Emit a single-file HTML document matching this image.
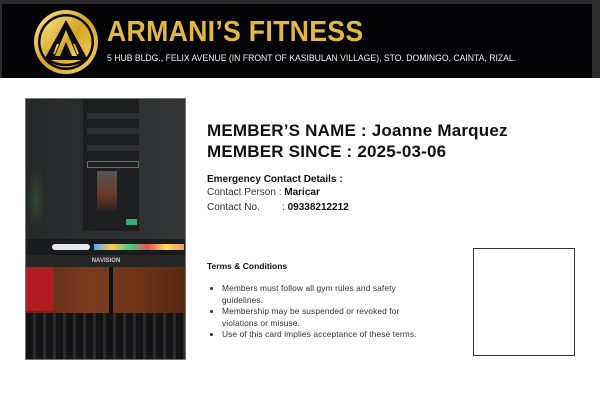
<!DOCTYPE html>
<html><head><meta charset="utf-8"><style>
*{margin:0;padding:0;box-sizing:border-box}
body{width:600px;height:400px;background:#fff;position:relative;overflow:hidden;font-family:"Liberation Sans",sans-serif;color:#111}
.hdr{position:absolute;left:0;top:0;width:600px;height:78px;background:#2b2b2b}
.hin{position:absolute;left:2px;top:4px;width:590px;height:74px;background:#030306}
.title{position:absolute;left:107px;top:16px;font-size:29px;font-weight:bold;color:#e3b83e;letter-spacing:0.3px;transform:scaleX(0.92);transform-origin:left}
.addr{position:absolute;left:107px;top:53px;font-size:9.5px;color:#eee;transform:scaleX(0.91);transform-origin:left;white-space:nowrap}
.photo{position:absolute;left:25px;top:98px;width:161px;height:262px;border:1px solid #777;overflow:hidden;background:#222}
.a{position:absolute}
.txt{position:absolute;left:207px;white-space:nowrap}
.box{position:absolute;left:473px;top:248px;width:102px;height:108px;border:1px solid #333}
ul{position:absolute;left:222px;top:283px;font-size:8.4px;color:#333;line-height:11.5px;width:240px;letter-spacing:0.1px}
</style></head><body>
<div class="hdr"><div class="hin"></div></div>
<svg class="a" style="left:32px;top:8px" width="68" height="68" viewBox="0 0 68 68">
<defs><linearGradient id="g" x1="0" y1="0" x2="1" y2="1"><stop offset="0" stop-color="#fbe58a"/><stop offset=".5" stop-color="#d6a524"/><stop offset="1" stop-color="#f2d062"/></linearGradient></defs>
<circle cx="34" cy="34" r="32" fill="url(#g)"/><circle cx="34" cy="34" r="28" fill="#0a0a0a"/><circle cx="34" cy="34" r="25.5" fill="url(#g)"/>
<path d="M34 12 L56 52 L12 52 Z" fill="#0a0a0a"/>
<path d="M34 22 L23 48 L28 48 L34 34 L40 48 L45 48 Z" fill="url(#g)"/>
<path d="M26 36 L22 46 M42 36 L46 46" stroke="url(#g)" stroke-width="2"/>
<path d="M16 52 Q34 62 52 52" stroke="#0a0a0a" stroke-width="2.5" fill="none"/>
</svg>
<div class="title">ARMANI’S FITNESS</div>
<div class="addr">5 HUB BLDG., FELIX AVENUE (IN FRONT OF KASIBULAN VILLAGE), STO. DOMINGO, CAINTA, RIZAL.</div>

<div class="photo">
<div class="a" style="left:0;top:0;width:160px;height:140px;background:linear-gradient(90deg,#252728,#2d3030 60%,#333536)"></div>
<div class="a" style="left:0;top:70px;width:20px;height:60px;background:radial-gradient(#2e4a30,transparent 70%)"></div>
<div class="a" style="left:57px;top:0;width:56px;height:132px;background:#1c1e1f"></div>
<div class="a" style="left:61px;top:14px;width:52px;height:6px;background:#2c2e2f"></div>
<div class="a" style="left:61px;top:29px;width:52px;height:6px;background:#2c2e2f"></div>
<div class="a" style="left:61px;top:46px;width:52px;height:6px;background:#2c2e2f"></div>
<div class="a" style="left:61px;top:62px;width:52px;height:7px;border:1px solid #3a8a5a"></div>
<div class="a" style="left:71px;top:72px;width:20px;height:40px;background:linear-gradient(#555,#6a3a2a 60%,#222)"></div>
<div class="a" style="left:100px;top:120px;width:11px;height:6px;background:#2cb07a"></div>
<div class="a" style="left:0;top:140px;width:160px;height:16px;background:#1a1b1d"></div>
<div class="a" style="left:26px;top:145px;width:38px;height:6px;background:#e8eaf0;border-radius:3px"></div>
<div class="a" style="left:68px;top:145px;width:90px;height:6px;background:linear-gradient(90deg,#5af,#fc4,#4c8,#e55,#fd5,#e96)"></div>
<div class="a" style="left:0;top:156px;width:160px;height:12px;background:#262626;color:#ccc;font-size:6px;text-align:center;line-height:12px;font-weight:bold">NAVISION</div>
<div class="a" style="left:0;top:168px;width:160px;height:46px;background:linear-gradient(90deg,#5a2a18,#7a3c1f 40%,#6d3419 70%,#56270f)"></div>
<div class="a" style="left:0;top:168px;width:28px;height:44px;background:#b01c22"></div>
<div class="a" style="left:83px;top:168px;width:4px;height:46px;background:#111"></div>
<div class="a" style="left:0;top:214px;width:160px;height:48px;background:repeating-linear-gradient(90deg,#141416 0 7px,#2a2a2d 7px 10px),#111"></div>
</div>

<div class="txt" style="top:121px;font-size:17px;font-weight:bold;letter-spacing:0.2px">MEMBER’S NAME : Joanne Marquez</div>
<div class="txt" style="top:142px;font-size:17px;font-weight:bold;letter-spacing:0.2px">MEMBER SINCE : 2025-03-06</div>
<div class="txt" style="top:174px;font-size:10px;font-weight:bold">Emergency Contact Details :</div>
<div class="txt" style="top:187px;font-size:10px;color:#333">Contact Person : <b style="color:#111">Maricar</b></div>
<div class="txt" style="top:202px;font-size:10px;color:#333">Contact No.&nbsp;&nbsp;&nbsp;&nbsp;&nbsp;&nbsp;&nbsp;&nbsp;: <b style="color:#111">09338212212</b></div>
<div class="txt" style="top:261px;font-size:8.5px;font-weight:bold">Terms &amp; Conditions</div>
<ul>
<li>Members must follow all gym rules and safety<br>guidelines.</li>
<li>Membership may be suspended or revoked for<br>violations or misuse.</li>
<li>Use of this card implies acceptance of these terms.</li>
</ul>
<div class="box"></div>
</body></html>
